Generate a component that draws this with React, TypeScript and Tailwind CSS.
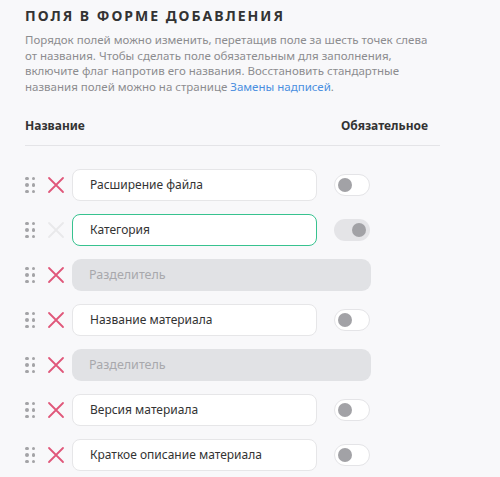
import React from "react";

type Row =
  | { kind: "field"; label: string; removable: boolean; active?: boolean; toggle: "off" | "locked" }
  | { kind: "separator" };

const rows: Row[] = [
  { kind: "field", label: "Расширение файла", removable: true, toggle: "off" },
  { kind: "field", label: "Категория", removable: false, active: true, toggle: "locked" },
  { kind: "separator" },
  { kind: "field", label: "Название материала", removable: true, toggle: "off" },
  { kind: "separator" },
  { kind: "field", label: "Версия материала", removable: true, toggle: "off" },
  { kind: "field", label: "Краткое описание материала", removable: true, toggle: "off" },
];

function Grip() {
  return (
    <div className="grid grid-cols-2 gap-x-[3px] gap-y-[3px] w-[10px]">
      {Array.from({ length: 6 }).map((_, i) => (
        <span key={i} className="block h-[3.5px] w-[3.5px] rounded-full bg-[#a3a3a6]" />
      ))}
    </div>
  );
}

function Cross({ on }: { on: boolean }) {
  return (
    <svg width="18" height="18" viewBox="0 0 18 18" fill="none">
      <path
        d="M2 2L16 16M16 2L2 16"
        stroke={on ? "#e0577a" : "#e9e9eb"}
        strokeWidth="1.8"
        strokeLinecap="round"
      />
    </svg>
  );
}

function Toggle({ state }: { state: "off" | "locked" }) {
  if (state === "locked") {
    return (
      <div className="flex h-[22px] w-[36px] items-center justify-end rounded-full bg-[#e4e4e7] pr-[4px]">
        <span className="block h-[14px] w-[14px] rounded-full bg-[#a2a2a6]" />
      </div>
    );
  }
  return (
    <div className="flex h-[22px] w-[36px] items-center rounded-full border-[1.5px] border-[#e4e4e7] bg-white pl-[3px]">
      <span className="block h-[14px] w-[14px] rounded-full bg-[#a2a2a6]" />
    </div>
  );
}

export default function App() {
  return (
    <div
      className="min-h-screen bg-[#f8f8fa] px-[25px] pt-[7px] text-[#333]"
      style={{ fontFamily: '"Noto Sans", sans-serif' }}
    >
      <h2 className="text-[14px] font-bold uppercase tracking-[2px] text-[#333] leading-[18px]">
        Поля в форме добавления
      </h2>
      <p className="mt-[7px] w-[412px] text-[11.5px] leading-[15.5px] text-[#8c8c8f]">
        Порядок полей можно изменить, перетащив поле за шесть точек слева от названия. Чтобы сделать поле
        обязательным для заполнения, включите флаг напротив его названия. Восстановить стандартные названия полей
        можно на странице <a href="#" className="text-[#4a8fe0]">Замены надписей</a>.
      </p>

      <div className="mt-[23px] flex w-[415px] items-center justify-between border-b border-[#e4e4e7] pb-[10px]">
        <span className="text-[12px] font-bold text-[#333]">Название</span>
        <span className="mr-[12px] text-[12px] font-bold text-[#333]">Обязательное</span>
      </div>

      <div className="mt-[23px] flex flex-col gap-[13px]">
        {rows.map((row, i) => (
          <div key={i} className="flex h-[32px] items-center">
            <div className="flex w-[22px] items-center">
              <Grip />
            </div>
            <div className="flex w-[25px] items-center">
              <Cross on={row.kind === "separator" || row.removable} />
            </div>
            {row.kind === "separator" ? (
              <div className="flex h-[32px] w-[299px] items-center rounded-[9px] bg-[#e1e2e5] pl-[17px] text-[12.5px] text-[#a8a8ac]">
                Разделитель
              </div>
            ) : (
              <>
                <div
                  className={
                    row.active
                      ? "flex h-[32px] w-[245px] items-center rounded-[8px] border-[1.5px] border-[#37c28f] bg-white pl-[17px] text-[12px] text-[#333]"
                      : "flex h-[32px] w-[245px] items-center rounded-[8px] border-[1.5px] border-[#e6e6e8] bg-white pl-[17px] text-[12px] text-[#333]"
                  }
                >
                  {row.label}
                </div>
                <div className="ml-[17px]">
                  <Toggle state={row.toggle} />
                </div>
              </>
            )}
          </div>
        ))}
      </div>
    </div>
  );
}
